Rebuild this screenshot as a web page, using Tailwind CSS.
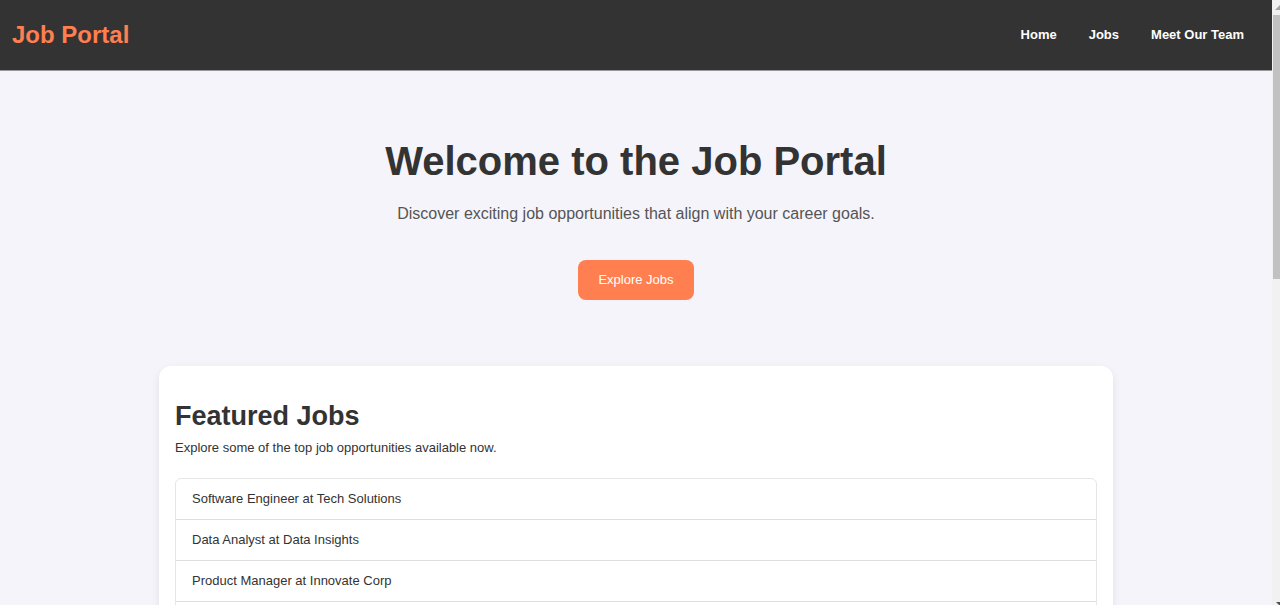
<!DOCTYPE html>
<html lang="en">
<head>
<meta charset="utf-8">
<meta name="viewport" content="width=device-width, initial-scale=1">
<title>Job Portal</title>
<script src="https://cdn.jsdelivr.net/npm/@tailwindcss/browser@4"></script>
</head>
<body class="flex h-screen overflow-hidden bg-[#f4f4fa] font-['Liberation_Sans',Arial,sans-serif] text-[#333]">
  <div class="min-w-0 flex-1">
    <header class="flex h-[70px] items-center justify-between bg-[#333] pl-3 pr-7 shadow-[0_1px_0_#99979c]">
      <a href="#" class="text-2xl font-bold text-[#ff7f50]">Job Portal</a>
      <nav class="flex gap-8 text-[13px] leading-5 font-bold text-white">
        <a href="#">Home</a>
        <a href="#">Jobs</a>
        <a href="#">Meet Our Team</a>
      </nav>
    </header>
    <main>
      <section class="flex flex-col items-center px-4 pt-[66px] pb-[66px] text-center">
        <h1 class="text-[40px] leading-[50px] font-bold">Welcome to the Job Portal</h1>
        <p class="mt-4 text-base leading-6 text-[#555]">Discover exciting job opportunities that align with your career goals.</p>
        <button type="button" class="mt-[34px] h-10 rounded-lg bg-[#ff7f50] px-5 text-[13px] text-white">Explore Jobs</button>
      </section>
      <section class="mx-auto w-3/4 rounded-xl bg-white px-4 pt-8 pb-8 shadow-[0_3px_8px_rgba(0,0,0,0.08)]">
        <h2 class="text-[27px] leading-9 font-bold">Featured Jobs</h2>
        <p class="mt-1 text-[13px] leading-5">Explore some of the top job opportunities available now.</p>
        <ul class="mt-5 divide-y divide-[#dedede] rounded-md border border-[#e6e6e6] text-[13px] leading-5">
          <li class="px-4 py-[10px]">Software Engineer at Tech Solutions</li>
          <li class="px-4 py-[10px]">Data Analyst at Data Insights</li>
          <li class="px-4 py-[10px]">Product Manager at Innovate Corp</li>
          <li class="h-10"></li>
        </ul>
      </section>
    </main>
  </div>
  <div class="flex w-2 shrink-0 flex-col overflow-hidden bg-[#f1f1f1]" aria-hidden="true">
    <svg class="h-[15px] w-2 shrink-0" viewBox="0 0 8 15"><path d="M3 10 8 5v5z" fill="#a3a3a3"/></svg>
    <div class="ml-px h-[264px] bg-[#c1c1c1]"></div>
    <svg class="mt-auto h-[3px] w-2 shrink-0" viewBox="0 0 8 3"><path d="M4 0h4v3H7z" fill="#505050"/></svg>
  </div>
</body>
</html>
